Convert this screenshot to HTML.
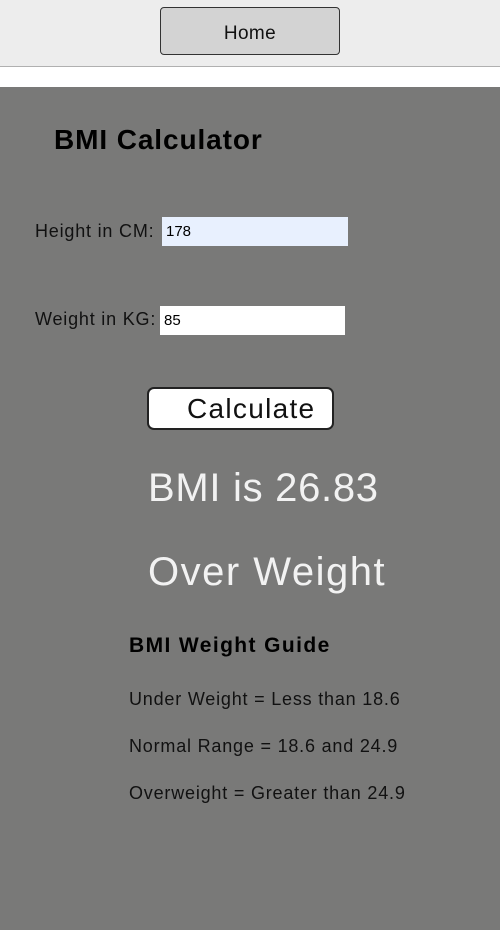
<!DOCTYPE html>
<html><head><style>
body{margin:0;width:500px;height:930px;position:relative;font-family:"Liberation Sans",sans-serif;background:#797978;overflow:hidden}
.a{position:absolute;white-space:nowrap}
.l{font-size:18px;color:#111;line-height:24px;letter-spacing:0.8px}
</style></head><body>
<div class="a" style="left:0;top:0;width:500px;height:66px;background:#ededed;border-bottom:1px solid #b0b0b0"></div>
<div class="a" style="left:160px;top:7px;width:178px;height:46px;background:#d3d3d3;border:1px solid #333;border-radius:4px;text-align:center;line-height:52px;font-size:19px;color:#111;letter-spacing:0.4px">Home</div>
<div class="a" style="left:0;top:67px;width:500px;height:20px;background:#fff"></div>
<div class="a" style="left:54px;top:123px;font-size:28px;font-weight:bold;color:#000;line-height:34px;letter-spacing:0.9px">BMI Calculator</div>
<div class="a l" style="left:35px;top:219px">Height in CM:</div>
<div class="a" style="left:162px;top:217px;width:182px;height:29px;background:#e8f0fe;font-size:15px;line-height:29px;padding-left:4px;color:#000">178</div>
<div class="a l" style="left:35px;top:307px">Weight in KG:</div>
<div class="a" style="left:160px;top:306px;width:181px;height:29px;background:#fff;font-size:15px;line-height:29px;padding-left:4px;color:#000">85</div>
<div class="a" style="left:147px;top:387px;width:183px;height:39px;background:#fff;border:2px solid #222;border-radius:7px;font-size:28px;line-height:39px;color:#111"><span style="position:absolute;left:38px;letter-spacing:1.3px">Calculate</span></div>
<div class="a" style="left:148px;top:463px;font-size:40px;color:#f2f2f2;line-height:50px;letter-spacing:0.7px">BMI is 26.83</div>
<div class="a" style="left:148px;top:547px;font-size:40px;color:#f2f2f2;line-height:50px;letter-spacing:1.5px">Over Weight</div>
<div class="a" style="left:129px;top:633px;font-size:21px;font-weight:bold;color:#000;line-height:26px;letter-spacing:1.4px">BMI Weight Guide</div>
<div class="a l" style="left:129px;top:687px">Under Weight = Less than 18.6</div>
<div class="a l" style="left:129px;top:734px">Normal Range = 18.6 and 24.9</div>
<div class="a l" style="left:129px;top:781px">Overweight = Greater than 24.9</div>
</body></html>
